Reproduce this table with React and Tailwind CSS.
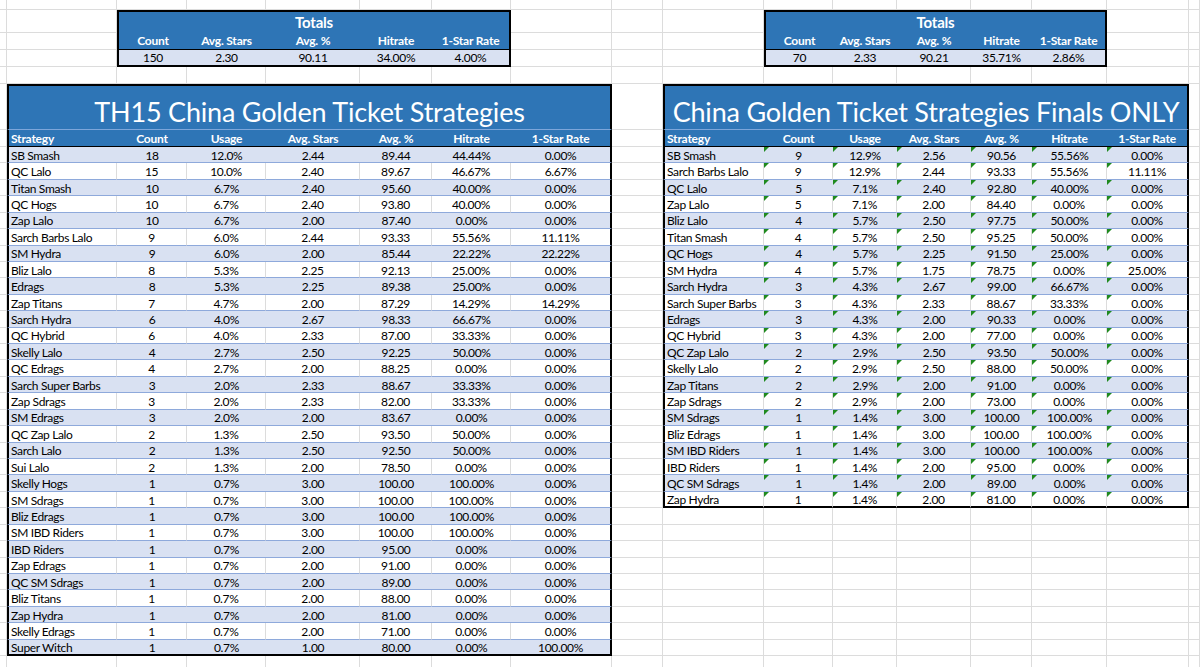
import React from "react";

const LEFT = [
  ["SB Smash", "18", "12.0%", "2.44", "89.44", "44.44%", "0.00%"],
  ["QC Lalo", "15", "10.0%", "2.40", "89.67", "46.67%", "6.67%"],
  ["Titan Smash", "10", "6.7%", "2.40", "95.60", "40.00%", "0.00%"],
  ["QC Hogs", "10", "6.7%", "2.40", "93.80", "40.00%", "0.00%"],
  ["Zap Lalo", "10", "6.7%", "2.00", "87.40", "0.00%", "0.00%"],
  ["Sarch Barbs Lalo", "9", "6.0%", "2.44", "93.33", "55.56%", "11.11%"],
  ["SM Hydra", "9", "6.0%", "2.00", "85.44", "22.22%", "22.22%"],
  ["Bliz Lalo", "8", "5.3%", "2.25", "92.13", "25.00%", "0.00%"],
  ["Edrags", "8", "5.3%", "2.25", "89.38", "25.00%", "0.00%"],
  ["Zap Titans", "7", "4.7%", "2.00", "87.29", "14.29%", "14.29%"],
  ["Sarch Hydra", "6", "4.0%", "2.67", "98.33", "66.67%", "0.00%"],
  ["QC Hybrid", "6", "4.0%", "2.33", "87.00", "33.33%", "0.00%"],
  ["Skelly Lalo", "4", "2.7%", "2.50", "92.25", "50.00%", "0.00%"],
  ["QC Edrags", "4", "2.7%", "2.00", "88.25", "0.00%", "0.00%"],
  ["Sarch Super Barbs", "3", "2.0%", "2.33", "88.67", "33.33%", "0.00%"],
  ["Zap Sdrags", "3", "2.0%", "2.33", "82.00", "33.33%", "0.00%"],
  ["SM Edrags", "3", "2.0%", "2.00", "83.67", "0.00%", "0.00%"],
  ["QC Zap Lalo", "2", "1.3%", "2.50", "93.50", "50.00%", "0.00%"],
  ["Sarch Lalo", "2", "1.3%", "2.50", "92.50", "50.00%", "0.00%"],
  ["Sui Lalo", "2", "1.3%", "2.00", "78.50", "0.00%", "0.00%"],
  ["Skelly Hogs", "1", "0.7%", "3.00", "100.00", "100.00%", "0.00%"],
  ["SM Sdrags", "1", "0.7%", "3.00", "100.00", "100.00%", "0.00%"],
  ["Bliz Edrags", "1", "0.7%", "3.00", "100.00", "100.00%", "0.00%"],
  ["SM IBD Riders", "1", "0.7%", "3.00", "100.00", "100.00%", "0.00%"],
  ["IBD Riders", "1", "0.7%", "2.00", "95.00", "0.00%", "0.00%"],
  ["Zap Edrags", "1", "0.7%", "2.00", "91.00", "0.00%", "0.00%"],
  ["QC SM Sdrags", "1", "0.7%", "2.00", "89.00", "0.00%", "0.00%"],
  ["Bliz Titans", "1", "0.7%", "2.00", "88.00", "0.00%", "0.00%"],
  ["Zap Hydra", "1", "0.7%", "2.00", "81.00", "0.00%", "0.00%"],
  ["Skelly Edrags", "1", "0.7%", "2.00", "71.00", "0.00%", "0.00%"],
  ["Super Witch", "1", "0.7%", "1.00", "80.00", "0.00%", "100.00%"],
];

const RIGHT = [
  ["SB Smash", "9", "12.9%", "2.56", "90.56", "55.56%", "0.00%"],
  ["Sarch Barbs Lalo", "9", "12.9%", "2.44", "93.33", "55.56%", "11.11%"],
  ["QC Lalo", "5", "7.1%", "2.40", "92.80", "40.00%", "0.00%"],
  ["Zap Lalo", "5", "7.1%", "2.00", "84.40", "0.00%", "0.00%"],
  ["Bliz Lalo", "4", "5.7%", "2.50", "97.75", "50.00%", "0.00%"],
  ["Titan Smash", "4", "5.7%", "2.50", "95.25", "50.00%", "0.00%"],
  ["QC Hogs", "4", "5.7%", "2.25", "91.50", "25.00%", "0.00%"],
  ["SM Hydra", "4", "5.7%", "1.75", "78.75", "0.00%", "25.00%"],
  ["Sarch Hydra", "3", "4.3%", "2.67", "99.00", "66.67%", "0.00%"],
  ["Sarch Super Barbs", "3", "4.3%", "2.33", "88.67", "33.33%", "0.00%"],
  ["Edrags", "3", "4.3%", "2.00", "90.33", "0.00%", "0.00%"],
  ["QC Hybrid", "3", "4.3%", "2.00", "77.00", "0.00%", "0.00%"],
  ["QC Zap Lalo", "2", "2.9%", "2.50", "93.50", "50.00%", "0.00%"],
  ["Skelly Lalo", "2", "2.9%", "2.50", "88.00", "50.00%", "0.00%"],
  ["Zap Titans", "2", "2.9%", "2.00", "91.00", "0.00%", "0.00%"],
  ["Zap Sdrags", "2", "2.9%", "2.00", "73.00", "0.00%", "0.00%"],
  ["SM Sdrags", "1", "1.4%", "3.00", "100.00", "100.00%", "0.00%"],
  ["Bliz Edrags", "1", "1.4%", "3.00", "100.00", "100.00%", "0.00%"],
  ["SM IBD Riders", "1", "1.4%", "3.00", "100.00", "100.00%", "0.00%"],
  ["IBD Riders", "1", "1.4%", "2.00", "95.00", "0.00%", "0.00%"],
  ["QC SM Sdrags", "1", "1.4%", "2.00", "89.00", "0.00%", "0.00%"],
  ["Zap Hydra", "1", "1.4%", "2.00", "81.00", "0.00%", "0.00%"],
];

const HEADERS = ["Strategy", "Count", "Usage", "Avg. Stars", "Avg. %", "Hitrate", "1-Star Rate"];
const TOT_HEADERS = ["Count", "Avg. Stars", "Avg. %", "Hitrate", "1-Star Rate"];

const TOTAL_ROWS = 39;

function Empty() {
  return <div className="border-r border-b border-r-[#dcdcdc] border-b-[#dcdcdc] bg-white" />;
}

function Triangle() {
  return (
    <span className="absolute left-0 top-0 h-0 w-0 border-t-[5px] border-r-[5px] border-t-[#1f8a1f] border-r-transparent" />
  );
}

function side(r, cfg, keyBase) {
  const cells = [];
  const k = (i) => `${keyBase}-${r}-${i}`;
  const { totals, title, data, triangles } = cfg;

  if (r === 0 || r === 4) {
    for (let i = 0; i < 7; i++) cells.push(<Empty key={k(i)} />);
    return cells;
  }

  if (r >= 1 && r <= 3) {
    cells.push(<Empty key={k("a")} />);
    if (r === 1) {
      cells.push(
        <div
          key={k("t")}
          className="col-span-5 flex items-center justify-center border-t-2 border-l-2 border-r-2 border-t-black border-l-black border-r-black bg-[#2E75B6] pb-[1px] text-[15px] font-bold leading-none tracking-[-0.2px] text-white"
        >
          Totals
        </div>
      );
    } else if (r === 2) {
      TOT_HEADERS.forEach((h, i) => {
        cells.push(
          <div
            key={k(i)}
            className={`flex items-center justify-center whitespace-nowrap border-b border-b-black bg-[#2E75B6] text-[12px] font-bold leading-none tracking-[-0.2px] text-white ${
              i === 0 ? "border-l-2 border-l-black" : ""
            } ${i === 4 ? "border-r-2 border-r-black" : ""}`}
          >
            {h}
          </div>
        );
      });
    } else {
      totals.forEach((v, i) => {
        cells.push(
          <div
            key={k(i)}
            className={`flex items-center justify-center whitespace-nowrap border-b-2 border-b-black bg-[#D9E1F2] text-[12px] leading-none tracking-[-0.3px] text-black ${
              i === 0 ? "border-l-2 border-l-black" : ""
            } ${i === 4 ? "border-r-2 border-r-black" : ""}`}
          >
            {v}
          </div>
        );
      });
    }
    cells.push(<Empty key={k("b")} />);
    return cells;
  }

  if (r === 5) {
    cells.push(
      <div
        key={k("title")}
        className="col-span-7 flex items-end justify-center overflow-hidden whitespace-nowrap border-t-2 border-l-2 border-r-2 border-b border-t-black border-l-black border-r-black border-b-[#7DA6DA] bg-[#2E75B6] pb-[4px] text-[27px] leading-none tracking-[-0.2px] text-white"
      >
        {title}
      </div>
    );
    return cells;
  }

  if (r === 6) {
    HEADERS.forEach((h, i) => {
      cells.push(
        <div
          key={k(i)}
          className={`flex items-center whitespace-nowrap border-b border-b-black bg-[#2E75B6] pt-[1px] text-[12px] font-bold leading-none tracking-[-0.2px] text-white ${
            i === 0 ? "justify-start border-l-2 border-l-black pl-[2px]" : "justify-center"
          } ${i === 6 ? "border-r-2 border-r-black" : ""}`}
        >
          {h}
        </div>
      );
    });
    return cells;
  }

  const idx = r - 7;
  if (idx < data.length) {
    const row = data[idx];
    const banded = idx % 2 === 0;
    const last = idx === data.length - 1;
    row.forEach((v, i) => {
      cells.push(
        <div
          key={k(i)}
          className={`relative flex items-center overflow-hidden whitespace-nowrap pt-[2px] text-[12px] leading-none tracking-[-0.35px] text-black ${
            banded ? "bg-[#D9E1F2]" : "bg-white"
          } ${last ? "border-b-2 border-b-black" : "border-b border-b-[#8EA9DB]"} ${
            i === 0 ? "justify-start border-l-2 border-l-black pl-[2px]" : "justify-center"
          } ${
            i === 6
              ? "border-r-2 border-r-black"
              : banded
              ? ""
              : "border-r border-r-[#dcdcdc]"
          }`}
        >
          {triangles && i > 0 ? <Triangle /> : null}
          {v}
        </div>
      );
    });
    return cells;
  }

  for (let i = 0; i < 7; i++) cells.push(<Empty key={k(i)} />);
  return cells;
}

const LEFT_CFG = {
  totals: ["150", "2.30", "90.11", "34.00%", "4.00%"],
  title: "TH15 China Golden Ticket Strategies",
  data: LEFT,
  triangles: false,
};

const RIGHT_CFG = {
  totals: ["70", "2.33", "90.21", "35.71%", "2.86%"],
  title: "China Golden Ticket Strategies Finals ONLY",
  data: RIGHT,
  triangles: true,
};

export default function App() {
  const cells = [];
  for (let r = 0; r < TOTAL_ROWS; r++) {
    cells.push(<Empty key={`c0-${r}`} />);
    cells.push(...side(r, LEFT_CFG, "L"));
    cells.push(<Empty key={`c8-${r}`} />);
    cells.push(...side(r, RIGHT_CFG, "R"));
    cells.push(<Empty key={`c16-${r}`} />);
  }
  return (
    <div className="h-[667px] w-[1200px] overflow-hidden bg-white font-[Lato,sans-serif]">
      <div className="grid grid-cols-[7px_110px_70px_79px_94px_72px_79px_101px_51px_101px_69px_64px_74px_61px_75px_82px_11px] grid-rows-[10px_23px_17px_17px_17px_46px_17px] auto-rows-[16.43px]">
        {cells}
      </div>
    </div>
  );
}
